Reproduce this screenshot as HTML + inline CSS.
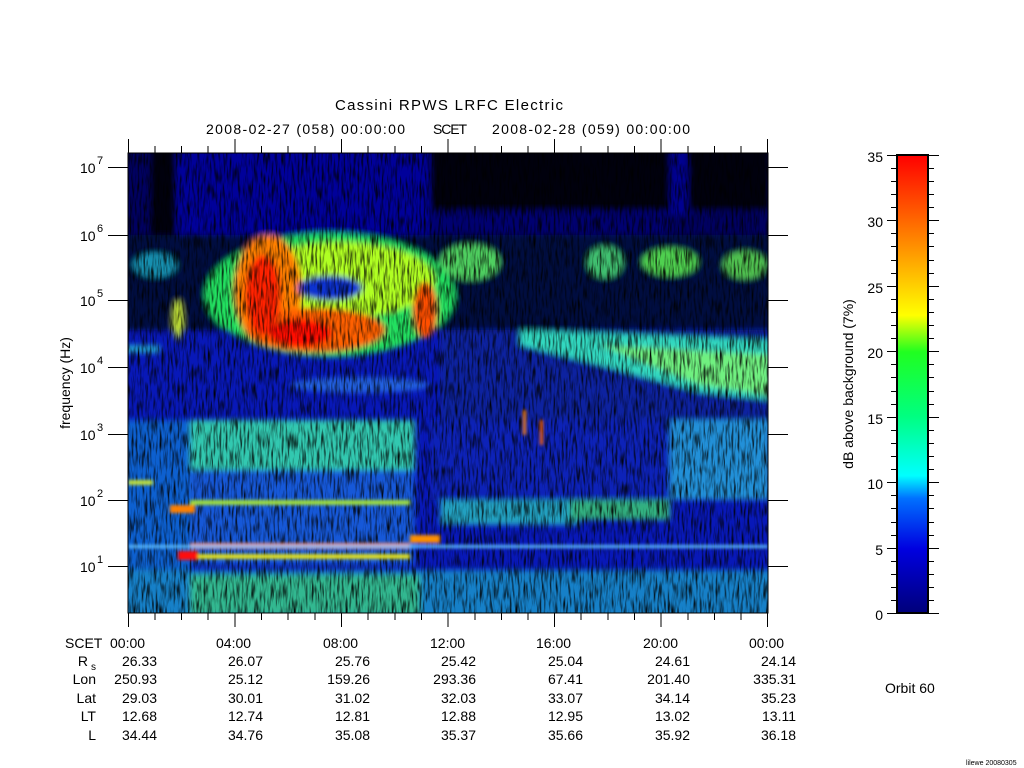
<!DOCTYPE html>
<html><head><meta charset="utf-8"><style>html,body{margin:0;padding:0;background:#fff}svg{display:block}text{font-family:"Liberation Sans",sans-serif;fill:#000}</style></head><body>
<svg width="1024" height="768" viewBox="0 0 1024 768" xmlns="http://www.w3.org/2000/svg">
<defs>
<filter id="b" x="-10%" y="-10%" width="120%" height="120%"><feGaussianBlur stdDeviation="3"/></filter>
<filter id="b2"><feGaussianBlur stdDeviation="1.5"/></filter>
<filter id="nz" x="0" y="0" width="100%" height="100%">
<feTurbulence type="fractalNoise" baseFrequency="0.5 0.06" numOctaves="2" seed="3"/>
<feColorMatrix type="matrix" values="0 0 0 0 0  0 0 0 0 0  0 0 0 0 0  0 0 0 -2.2 1.25"/>
</filter>
<clipPath id="cp"><rect x="128" y="153" width="640" height="460"/></clipPath>
<linearGradient id="cb" x1="0" y1="1" x2="0" y2="0">
<stop offset="0" stop-color="#00007a"/><stop offset="0.14" stop-color="#0000e0"/><stop offset="0.25" stop-color="#0070ff"/>
<stop offset="0.3" stop-color="#00ffff"/><stop offset="0.43" stop-color="#00ff80"/><stop offset="0.57" stop-color="#20ff20"/>
<stop offset="0.65" stop-color="#ffff00"/><stop offset="0.8" stop-color="#ff9000"/><stop offset="1" stop-color="#ff0000"/>
</linearGradient>
</defs>
<text x="335" y="110" font-size="15" textLength="228">Cassini RPWS LRFC Electric</text>
<text x="206" y="134" font-size="14" textLength="199">2008-02-27 (058) 00:00:00</text>
<text x="433" y="134" font-size="14" textLength="34">SCET</text>
<text x="492" y="134" font-size="14" textLength="198">2008-02-28 (059) 00:00:00</text>
<g clip-path="url(#cp)">
<rect x="128" y="153" width="640" height="460" fill="#0818b8"/>
<g filter="url(#b)">
<rect x="120" y="145" width="660" height="90" fill="#000060"/>
<rect x="176" y="145" width="254" height="90" fill="#00009a"/>
<rect x="430" y="145" width="340" height="65" fill="#000010"/>
<rect x="430" y="210" width="240" height="25" fill="#000070"/>
<rect x="670" y="145" width="18" height="70" fill="#000090"/>
<rect x="150" y="145" width="26" height="160" fill="#000008"/>
<rect x="120" y="235" width="660" height="95" fill="#000840"/>
<ellipse cx="330" cy="295" rx="125" ry="62" fill="#20e060"/>
<ellipse cx="340" cy="280" rx="95" ry="38" fill="#b0ff20"/>
<ellipse cx="268" cy="290" rx="34" ry="55" fill="#ff8000"/>
<ellipse cx="315" cy="330" rx="70" ry="22" fill="#ff6000"/>
<ellipse cx="263" cy="295" rx="18" ry="40" fill="#ff2000"/>
<ellipse cx="300" cy="333" rx="32" ry="14" fill="#ff1000"/>
<ellipse cx="425" cy="310" rx="12" ry="28" fill="#ff5000"/>
<ellipse cx="330" cy="288" rx="32" ry="12" fill="#1030d0"/>
<ellipse cx="470" cy="262" rx="30" ry="18" fill="#50d060"/>
<ellipse cx="605" cy="262" rx="18" ry="16" fill="#40c070"/>
<ellipse cx="670" cy="262" rx="28" ry="14" fill="#50d050"/>
<ellipse cx="745" cy="265" rx="22" ry="14" fill="#50c050"/>
<ellipse cx="155" cy="265" rx="22" ry="12" fill="#1890b0"/>
<ellipse cx="178" cy="320" rx="5" ry="20" fill="#c0e030"/>
<rect x="120" y="345" width="40" height="8" fill="#20a0d0"/>
<rect x="440" y="330" width="340" height="100" fill="#0820a0"/>
<path d="M520 330 L770 340 L770 400 L700 392 L600 365 L520 345 Z" fill="#30d8c0"/>
<path d="M600 345 L770 355 L770 395 L700 385 Z" fill="#70f080"/>
<ellipse cx="360" cy="385" rx="70" ry="8" fill="#2060e0"/>
<rect x="190" y="420" width="225" height="50" fill="#30c8b0"/>
<rect x="190" y="470" width="225" height="95" fill="#1858d8"/>
<rect x="120" y="420" width="70" height="150" fill="#1060d0"/>
<rect x="670" y="420" width="100" height="80" fill="#2090d8"/>
<rect x="440" y="500" width="140" height="25" fill="#20a0c0"/>
<rect x="570" y="500" width="100" height="20" fill="#30b080"/>
<rect x="120" y="570" width="660" height="50" fill="#1880c8"/>
<rect x="190" y="575" width="230" height="40" fill="#30b890"/>
<rect x="430" y="420" width="240" height="80" fill="#0a24b8"/>
</g>
<rect x="128" y="153" width="640" height="460" filter="url(#nz)"/>
<g filter="url(#b2)">
<rect x="190" y="543" width="220" height="6" fill="#ff8020"/>
<rect x="190" y="554" width="220" height="5" fill="#e0e020"/>
<rect x="178" y="551" width="20" height="9" fill="#ff1010"/>
<rect x="190" y="500" width="220" height="5" fill="#a0e040"/>
<rect x="170" y="505" width="25" height="8" fill="#ff8000"/>
<rect x="410" y="535" width="30" height="8" fill="#ff9000"/>
<rect x="540" y="420" width="3" height="25" fill="#ff6000"/>
<rect x="523" y="410" width="3" height="25" fill="#ff8000"/>
<rect x="128" y="480" width="25" height="5" fill="#c0e040"/>
<rect x="128" y="545" width="640" height="3" fill="#60c0ff"/>
</g>
</g>
<rect x="128" y="153" width="640" height="460" fill="none" stroke="#000" stroke-width="1"/>
<g stroke="#000" stroke-width="1">
<path d="M128.5 139V153M235 139V153M341.5 139V153M448 139V153M554.5 139V153M661 139V153M767.5 139V153
M155 146V153M181.5 146V153M208 146V153M261.5 146V153M288 146V153M315 146V153M368 146V153M395 146V153M421.5 146V153M475 146V153M501.5 146V153M528 146V153M581 146V153M608 146V153M634.5 146V153M688 146V153M714.5 146V153M741 146V153
M128.5 613V627M235 613V627M341.5 613V627M448 613V627M554.5 613V627M661 613V627M767.5 613V627
M155 613V620M181.5 613V620M208 613V620M261.5 613V620M288 613V620M315 613V620M368 613V620M395 613V620M421.5 613V620M475 613V620M501.5 613V620M528 613V620M581 613V620M608 613V620M634.5 613V620M688 613V620M714.5 613V620M741 613V620
M108 167.5H128M108 235.5H128M108 300.5H128M108 367.5H128M108 434.5H128M108 500.5H128M108 566.5H128
M768 167.5H788M768 235.5H788M768 300.5H788M768 367.5H788M768 434.5H788M768 500.5H788M768 566.5H788"/>
</g>
<g font-size="14">
<text x="80" y="173">10</text><text x="97" y="164" font-size="11">7</text>
<text x="80" y="241">10</text><text x="97" y="232" font-size="11">6</text>
<text x="80" y="306">10</text><text x="97" y="297" font-size="11">5</text>
<text x="80" y="373">10</text><text x="97" y="364" font-size="11">4</text>
<text x="80" y="440">10</text><text x="97" y="431" font-size="11">3</text>
<text x="80" y="506">10</text><text x="97" y="497" font-size="11">2</text>
<text x="80" y="572">10</text><text x="97" y="563" font-size="11">1</text>
</g>
<text transform="translate(70,383) rotate(-90)" text-anchor="middle" font-size="14">frequency (Hz)</text>
<rect x="897" y="155" width="31" height="458" fill="url(#cb)" stroke="#000" stroke-width="2"/>
<g stroke="#000" stroke-width="1">
<path d="M887 155.5H897M928 155.5H939M887 220.5H897M928 220.5H939M887 286.5H897M928 286.5H939M887 351.5H897M928 351.5H939M887 417.5H897M928 417.5H939M887 482.5H897M928 482.5H939M887 548.5H897M928 548.5H939M887 613.5H897M928 613.5H939"/>
<path d="M891 168.5H897M891 181.5H897M891 194.5H897M891 207.5H897M891 233.5H897M891 246.5H897M891 260.5H897M891 273.5H897M891 299.5H897M891 312.5H897M891 325.5H897M891 338.5H897M891 364.5H897M891 377.5H897M891 391.5H897M891 404.5H897M891 430.5H897M891 443.5H897M891 456.5H897M891 469.5H897M891 495.5H897M891 508.5H897M891 522.5H897M891 535.5H897M891 561.5H897M891 574.5H897M891 587.5H897M891 600.5H897"/>
<path d="M928 168.5H934M928 181.5H934M928 194.5H934M928 207.5H934M928 233.5H934M928 246.5H934M928 260.5H934M928 273.5H934M928 299.5H934M928 312.5H934M928 325.5H934M928 338.5H934M928 364.5H934M928 377.5H934M928 391.5H934M928 404.5H934M928 430.5H934M928 443.5H934M928 456.5H934M928 469.5H934M928 495.5H934M928 508.5H934M928 522.5H934M928 535.5H934M928 561.5H934M928 574.5H934M928 587.5H934M928 600.5H934"/>
</g>
<g font-size="14" text-anchor="end">
<text x="883" y="162">35</text><text x="883" y="227">30</text><text x="883" y="293">25</text><text x="883" y="358">20</text>
<text x="883" y="424">15</text><text x="883" y="489">10</text><text x="883" y="555">5</text><text x="883" y="620">0</text>
</g>
<text transform="translate(853,384) rotate(-90)" text-anchor="middle" font-size="14">dB above background (7%)</text>
<g font-size="14">
<text x="65" y="648">SCET</text>
<text x="110" y="648">00:00</text><text x="216" y="648">04:00</text><text x="323" y="648">08:00</text><text x="430" y="648">12:00</text><text x="536" y="648">16:00</text><text x="643" y="648">20:00</text><text x="749" y="648">00:00</text>
<g text-anchor="end">
<text x="88" y="666">R</text><text x="96" y="670" font-size="10">s</text>
<text x="96" y="684">Lon</text><text x="96" y="703">Lat</text><text x="96" y="721">LT</text><text x="96" y="740">L</text>
<text x="157" y="666">26.33</text><text x="263" y="666">26.07</text><text x="370" y="666">25.76</text><text x="476" y="666">25.42</text><text x="583" y="666">25.04</text><text x="690" y="666">24.61</text><text x="796" y="666">24.14</text>
<text x="157" y="684">250.93</text><text x="263" y="684">25.12</text><text x="370" y="684">159.26</text><text x="476" y="684">293.36</text><text x="583" y="684">67.41</text><text x="690" y="684">201.40</text><text x="796" y="684">335.31</text>
<text x="157" y="703">29.03</text><text x="263" y="703">30.01</text><text x="370" y="703">31.02</text><text x="476" y="703">32.03</text><text x="583" y="703">33.07</text><text x="690" y="703">34.14</text><text x="796" y="703">35.23</text>
<text x="157" y="721">12.68</text><text x="263" y="721">12.74</text><text x="370" y="721">12.81</text><text x="476" y="721">12.88</text><text x="583" y="721">12.95</text><text x="690" y="721">13.02</text><text x="796" y="721">13.11</text>
<text x="157" y="740">34.44</text><text x="263" y="740">34.76</text><text x="370" y="740">35.08</text><text x="476" y="740">35.37</text><text x="583" y="740">35.66</text><text x="690" y="740">35.92</text><text x="796" y="740">36.18</text>
</g>
<text x="885" y="693">Orbit  60</text>
<text x="966" y="765" font-size="7">lilewe 20080305</text>
</g>
</svg>
</body></html>
